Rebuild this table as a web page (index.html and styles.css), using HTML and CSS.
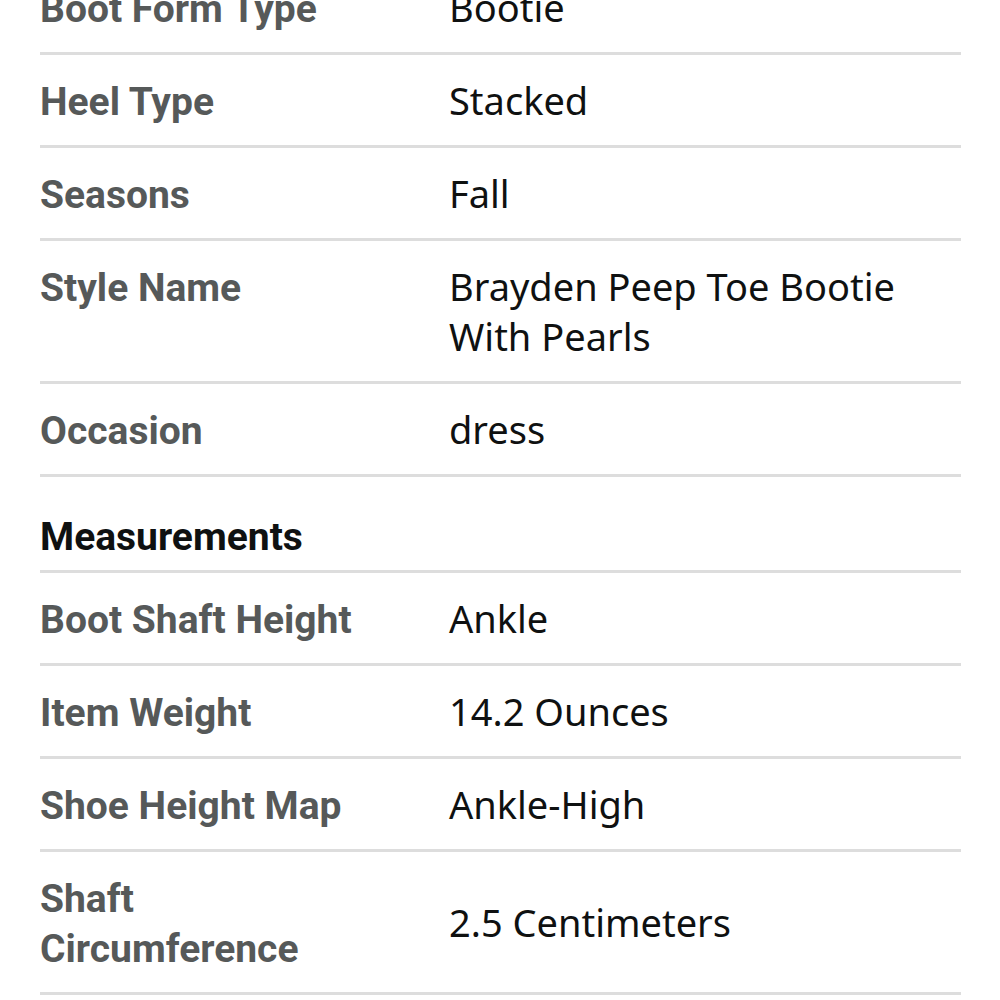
FILE: index.html
```html
<!DOCTYPE html>
<html>
<head>
<meta charset="utf-8">
<link rel="stylesheet" href="styles.css">
</head>
<body>
<div class="sheet">
  <div class="row"><div class="label">Boot Form Type</div><div class="value">Bootie</div></div>
  <div class="row"><div class="label">Heel Type</div><div class="value">Stacked</div></div>
  <div class="row"><div class="label">Seasons</div><div class="value">Fall</div></div>
  <div class="row"><div class="label">Style Name</div><div class="value">Brayden Peep Toe Bootie With Pearls</div></div>
  <div class="row"><div class="label">Occasion</div><div class="value">dress</div></div>
  <div class="heading">Measurements</div>
  <div class="row"><div class="label">Boot Shaft Height</div><div class="value">Ankle</div></div>
  <div class="row"><div class="label">Item Weight</div><div class="value">14.2 Ounces</div></div>
  <div class="row"><div class="label">Shoe Height Map</div><div class="value">Ankle-High</div></div>
  <div class="row center"><div class="label">Shaft Circumference</div><div class="value">2.5 Centimeters</div></div>
</div>
</body>
</html>
```
FILE: styles.css
```css
html, body {
  margin: 0;
  padding: 0;
  background: #fff;
}
body {
  font-family: "Noto Sans", "Open Sans", sans-serif;
  font-size: 38px;
  line-height: 50px;
  color: #0f1111;
}
.sheet {
  margin: -38px 39px 0 40px;
}
.row {
  display: grid;
  grid-template-columns: 409px 1fr;
  padding: 20px 0;
  border-bottom: 3px solid #dddddd;
}
.row.center {
  align-items: center;
}
.label {
  font-family: Roboto, "Liberation Sans", sans-serif;
  font-size: 39px;
  font-weight: 700;
  color: #565959;
  padding-right: 60px;
  margin-top: 2px;
  margin-bottom: -2px;
}
.value {
  color: #0f1111;
}
.heading {
  font-family: Roboto, "Liberation Sans", sans-serif;
  font-size: 39px;
  font-weight: 700;
  color: #0f1111;
  padding: 35px 0 8px;
  border-bottom: 3px solid #dddddd;
}
```
